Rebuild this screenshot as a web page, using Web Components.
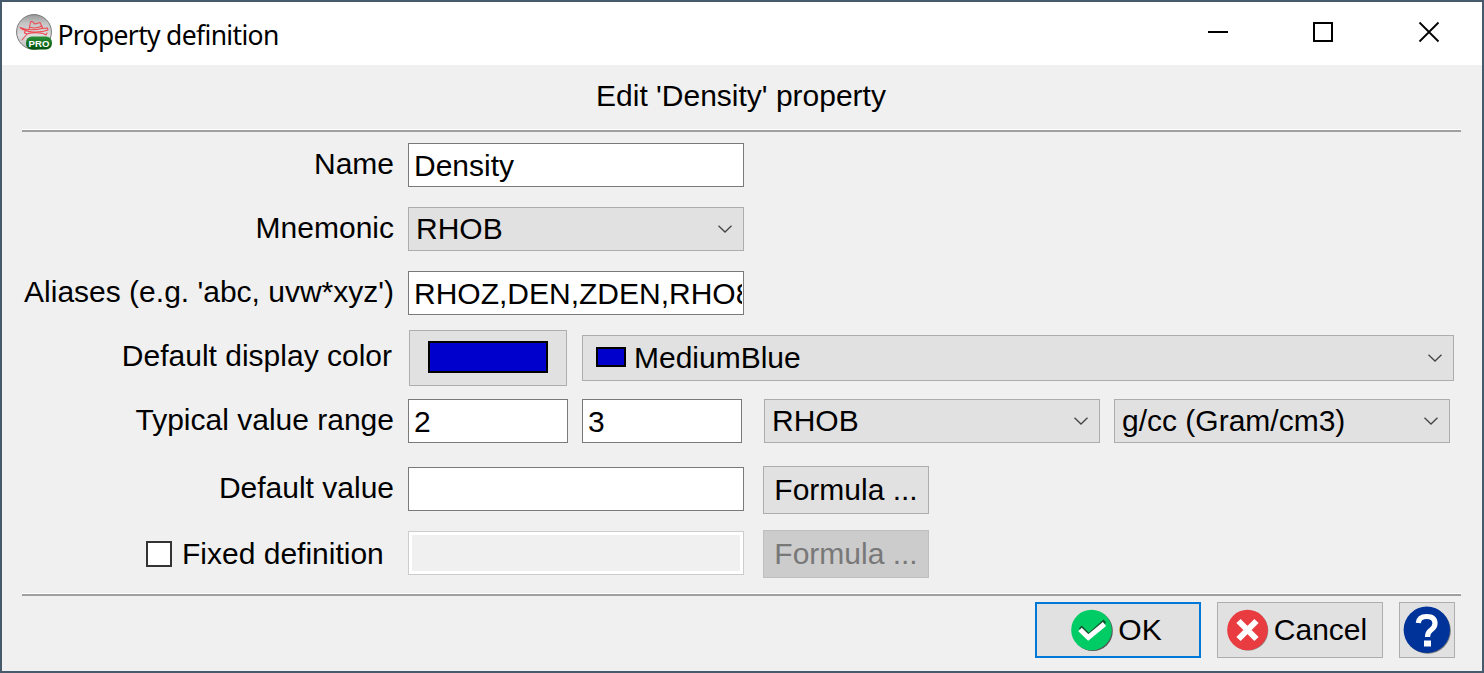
<!DOCTYPE html>
<html lang="en">
<head>
<meta charset="utf-8">
<title>Property definition</title>
<style>
html,body{margin:0;height:100%;overflow:hidden}
body{font:30px/44px "Liberation Sans",Arial,sans-serif;color:#000}
</style>
</head>
<body>
<dialog-window>
  <title-bar slot="title">Property definition</title-bar>
  <dialog-heading>Edit 'Density' property</dialog-heading>
  <rule-line></rule-line>
  <form-body>
    <form-row><field-label slot="label">Name</field-label><text-field>Density</text-field></form-row>
    <form-row><field-label slot="label">Mnemonic</field-label><combo-box>RHOB</combo-box></form-row>
    <form-row><field-label slot="label">Aliases (e.g. 'abc, uvw*xyz')</field-label><text-field>RHOZ,DEN,ZDEN,RHO8</text-field></form-row>
    <form-row><field-label slot="label" style="padding-right:2px">Default display color</field-label><color-button></color-button><combo-box style="--w:872px;--h:46px;--pl:13px"><color-swatch></color-swatch>MediumBlue</combo-box></form-row>
    <form-row style="--rh:68px"><field-label slot="label">Typical value range</field-label><text-field style="--w:160px">2</text-field><text-field style="--w:160px">3</text-field><combo-box style="margin-left:8px">RHOB</combo-box><combo-box>g/cc (Gram/cm3)</combo-box></form-row>
    <form-row><field-label slot="label">Default value</field-label><text-field></text-field><push-button class="formula">Formula ...</push-button></form-row>
    <form-row><check-box slot="label">Fixed definition</check-box><text-field disabled></text-field><push-button disabled class="formula">Formula ...</push-button></form-row>
  </form-body>
  <rule-line></rule-line>
  <button-bar>
    <push-button primary style="--shift:3px"><ui-icon name="ok"></ui-icon>OK</push-button>
    <push-button style="--shift:6px"><ui-icon name="cancel"></ui-icon>Cancel</push-button>
    <push-button style="--w:56px"><ui-icon name="help"></ui-icon></push-button>
  </button-bar>
</dialog-window>
<script>
const define = (name, html, setup) => customElements.define(name, class extends HTMLElement {
  constructor() {
    super();
    this.attachShadow({mode: 'open'}).innerHTML = html;
  }
  connectedCallback() { if (setup) setup(this, this.shadowRoot); }
});

define('dialog-window', `<style>
:host{display:flex;flex-direction:column;box-sizing:border-box;width:1484px;height:673px;border:2px solid #465a6c;background:#f0f0f0}
main{display:flex;flex-direction:column;flex:1;padding:0 21px 0 20px}
</style><slot name="title"></slot><main><slot></slot></main>`);

define('title-bar', `<style>
:host{display:flex;align-items:center;height:63px;background:#fff;font:26.5px/36px "Noto Sans","Open Sans",sans-serif}
.logo{margin:0 0 3px 13px;width:38px;height:38px;flex:none}
.t{flex:1;margin:3px 0 0 4.5px;white-space:nowrap;letter-spacing:-.67px}
.ctl{width:22px;height:22px;margin:0 84px 3px 0;flex:none}
.ctl.min{margin-right:83px}
.ctl:last-child{margin-right:42px}
</style>
<svg class="logo" viewBox="0 0 38 38">
<defs><linearGradient id="g" x2="0" y2="1"><stop offset="0" stop-color="#999"/><stop offset=".25" stop-color="#c4c4c4"/><stop offset=".6" stop-color="#dedede"/><stop offset="1" stop-color="#bbb"/></linearGradient>
<linearGradient id="p" x2="0" y2="1"><stop offset="0" stop-color="#2c9138"/><stop offset="1" stop-color="#00540c"/></linearGradient></defs>
<circle cx="19" cy="19" r="17.400" fill="url(#g)" stroke="#777" stroke-width="1"/>
<g fill="none" stroke="#ee4850" stroke-width="1.050" stroke-linejoin="round" stroke-linecap="round">
<path d="M5 14.500Q15 18.500 27 15.500L32.500 15L33 17Q27 19.500 18 19Q9 18 5 14.500ZM14 16.500L15.500 9L17 8.300L20 11L25 9.500L27.500 15M14.500 14Q20 16.500 27 13M10 18L9.500 20L12 21L7 27M12 21Q19 18.500 28 20.500L31 22L32 20"/></g>
<rect x="11" y="23.500" width="26" height="13" rx="6" fill="url(#p)"/>
<text x="24" y="33.600" text-anchor="middle" font-family="Liberation Sans,sans-serif" font-weight="700" font-size="9.600" fill="#fff">PRO</text>
</svg>
<span class="t"><slot></slot></span>
<svg class="ctl min" viewBox="0 0 22 22"><path d="M1 11H21" stroke="#000" stroke-width="2"/></svg>
<svg class="ctl" viewBox="0 0 22 22"><path d="M2 2H20V20H2Z" fill="none" stroke="#000" stroke-width="2"/></svg>
<svg class="ctl" viewBox="0 0 22 22"><path d="M1.500 1.500L20.500 20.500M20.500 1.500L1.500 20.500" stroke="#000" stroke-width="1.800"/></svg>`);

define('dialog-heading', `<style>:host{display:block;height:64px;line-height:62px;text-align:center;padding-right:1px}</style><slot></slot>`);
define('rule-line', `<style>:host{display:block;height:2px;border-top:1px solid #fff;background:#a0a0a0}</style>`);
define('form-body', `<style>:host{display:flex;flex-direction:column;box-sizing:border-box;height:461px;padding-top:11px}</style><slot></slot>`);

define('form-row', `<style>
:host{display:grid;grid-template-columns:372px 1fr;column-gap:14px;height:var(--rh,64px);flex:none}
.fields{display:flex;align-items:flex-start;gap:14px}
</style><slot name="label"></slot><div class="fields"><slot></slot></div>`);

define('field-label', `<style>:host{display:block;height:42px;line-height:42px;text-align:right;white-space:nowrap}</style><slot></slot>`);

define('text-field', `<style>
:host{display:block;box-sizing:border-box;width:var(--w,336px);height:44px;border:1px solid #7a7a7a;background:#fff;padding:0 1px 0 5px;line-height:43px;flex:none}
span{display:block;height:42px;overflow:hidden;white-space:nowrap}
:host([disabled]){border-color:#ccc;background:#f0f0f0;box-shadow:inset 0 0 0 3px #fff}
</style><span><slot></slot></span>`);

define('combo-box', `<style>
:host{display:flex;align-items:center;box-sizing:border-box;width:var(--w,336px);height:var(--h,44px);border:1px solid #adadad;background:#e1e1e1;padding:0 11.5px 0 var(--pl,7px);flex:none}
.v{display:flex;align-items:center;flex:1;line-height:41px;margin-bottom:2px;white-space:nowrap}
svg{width:14px;height:8px;flex:none}
</style><span class="v"><slot></slot></span><svg viewBox="0 0 14 8"><path d="M.5.7L7 7L13.5.7" fill="none" stroke="#444" stroke-width="1.300"/></svg>`);

define('color-swatch', `<style>:host{display:block;box-sizing:border-box;width:30px;height:20px;border:2px solid #000;background:#0000cd;margin-right:8px}</style>`);

define('color-button', `<style>
:host{display:flex;align-items:center;justify-content:center;box-sizing:border-box;width:158px;height:56px;margin:-5px 1px 0;border:1px solid #adadad;background:#e1e1e1;flex:none}
span{box-sizing:border-box;width:120px;height:32px;border:2px solid #000;background:#0000cd;margin-bottom:2px}
</style><span></span>`);

define('check-box', `<style>
:host{display:flex;align-items:center;height:46px;margin-left:124px;white-space:nowrap}
i{box-sizing:border-box;width:26px;height:26px;border:2px solid #333;background:#fff;margin:0 10px 0 0}
</style><i></i><slot></slot>`);

define('push-button', `<style>
:host{display:flex;align-items:center;justify-content:center;box-sizing:border-box;width:var(--w,166px);height:56px;border:1px solid #adadad;background:#e1e1e1;padding-right:var(--shift,0px);white-space:nowrap;flex:none}
:host([primary]){border:2px solid #0078d7}
:host(.formula){height:48px;margin:-1px 0 0 5px;line-height:46px}
:host([disabled]){background:#ccc;border-color:#bfbfbf;color:#787878}
</style><slot></slot>`);

define('button-bar', `<style>:host{display:flex;justify-content:flex-end;gap:16px;padding:6px 6px 0 0}</style><slot></slot>`);

const icons = {
  ok: `<svg width="42" height="44" viewBox="0 0 42 44"><circle cx="21.800" cy="23" r="20" fill="#555"/><circle cx="20.500" cy="22" r="20.300" fill="#00cc66"/><path d="M9 20.500L17.300 29L33.500 14.500" transform="translate(.3 -1.500)" fill="none" stroke="#14532f" stroke-width="4"/><path d="M9 21.500L17.300 29.500L33.500 16" fill="none" stroke="#fff" stroke-width="5"/></svg>`,
  cancel: `<svg width="42" height="44" viewBox="0 0 42 44"><circle cx="21.300" cy="22.600" r="20" fill="#888"/><circle cx="20.500" cy="22" r="20.300" fill="#e83c40"/><path d="M11.500 13L29.500 31M29.500 13L11.500 31" stroke="#fff" stroke-width="6"/></svg>`,
  help: `<svg width="48" height="48" viewBox="0 0 48 48"><circle cx="24.800" cy="24.800" r="23" fill="#777"/><circle cx="23.800" cy="23.800" r="23.200" fill="#003399"/><path d="M15.300 17Q16 10.500 23.500 10.500Q32 10.500 32 17.500Q32 21 28 24Q24.500 26.500 24.500 31" fill="none" stroke="#fff" stroke-width="5.200"/><path d="M21 34.500H28V40.500H21Z" fill="#fff"/></svg>`
};
define('ui-icon', `<style>:host{display:block;margin-right:5px}:host([name=help]){margin:0}svg{display:block}</style><span></span>`,
  (el, root) => { root.querySelector('span').innerHTML = icons[el.getAttribute('name')]; });
</script>
</body>
</html>
